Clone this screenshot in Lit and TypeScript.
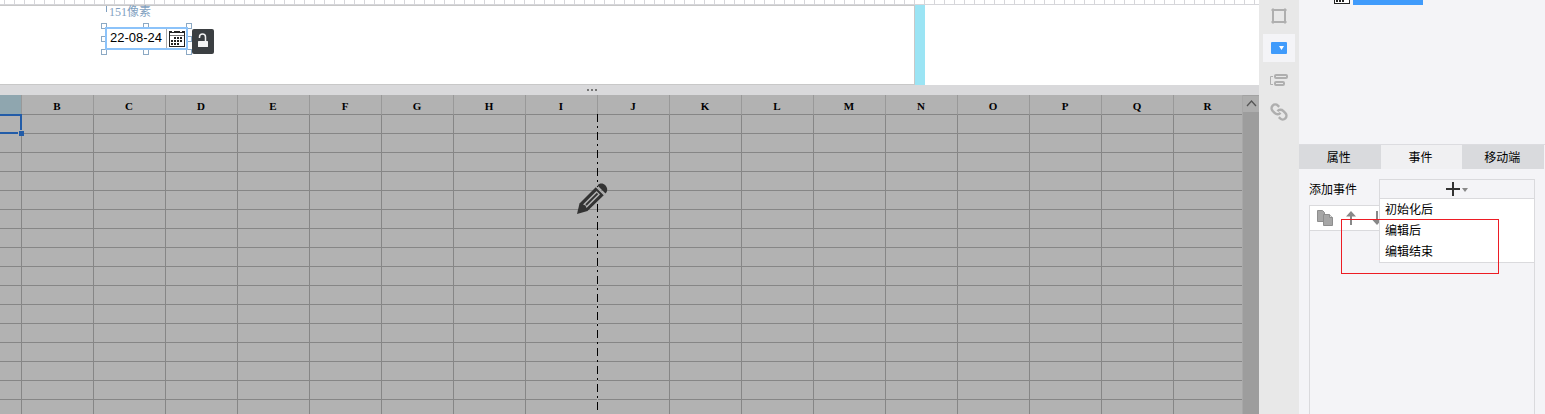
import { LitElement, html, css, svg } from "lit";
import { customElement, state } from "lit/decorators.js";

const calendarIcon = svg`
  <rect x="0.5" y="0.5" width="15" height="15" fill="#fff" stroke="#222"></rect>
  <path d="M0 0h16v2H0z" fill="#222"></path>
  <path d="M3 0h2v1H3zM11 0h2v1h-2z" fill="#fff"></path>
  <path d="M1 4.500h14" stroke="#777"></path>
  <path d="M5 6h2v2H5zM8 6h2v2H8zM11 6h2v2h-2zM2 9h2v2H2zM5 9h2v2H5zM8 9h2v2H8zM11 9h2v2h-2zM2 12h2v2H2zM5 12h2v2H5zM8 12h2v2H8z" fill="#222"></path>`;

@customElement("form-canvas")
export class FormCanvas extends LitElement {
  static styles = css`
    :host { display: block; background: #fff; }
    .ruler {
      height: 4px;
      border-bottom: 1px solid #d6d6da;
      background: repeating-linear-gradient(90deg, transparent 0 4px, #d6d6da 4px 5px, transparent 5px 10px);
    }
    .stage { display: flex; height: 80px; }
    .paper {
      position: relative;
      box-sizing: border-box;
      width: 915px;
      border: solid #c8c8c8;
      border-width: 1px 1px 1px 0;
    }
    .edge { width: 10px; background: #9be4f4; }
    .size {
      position: absolute;
      left: 106px;
      top: 0;
      padding-left: 3px;
      color: #7f9fbf;
      font: 12px/13px "Liberation Serif", "Noto Sans CJK SC", serif;
    }
    .size::before {
      content: "";
      position: absolute;
      left: 0;
      top: 0;
      height: 6px;
      border-left: 1px solid #7f9fbf;
    }
    .widget { position: absolute; left: 101px; top: 17px; width: 91px; height: 32px; }
    .handle {
      position: absolute;
      box-sizing: border-box;
      width: 6px;
      height: 6px;
      border: 1px solid #8ca9c4;
      background: #fff;
    }
    .n { top: 0; }
    .m { top: 13px; }
    .s { bottom: 0; }
    .w { left: 0; }
    .c { left: 42px; }
    .e { right: 0; }
    .field {
      position: absolute;
      left: 4px;
      top: 4px;
      box-sizing: border-box;
      width: 83px;
      height: 23px;
      display: flex;
      border: 2px solid #8cc3fa;
      background: #fff;
    }
    .date {
      flex: 1;
      min-width: 0;
      padding: 0 0 2px 3px;
      border: 0;
      outline: 0;
      background: none;
      color: #000;
      font: 13px/16px "Liberation Sans", sans-serif;
    }
    .pick {
      padding: 0 1px 0 2px;
      border: 0;
      border-left: 1px solid #aaa;
      background: #fff;
      line-height: 0;
    }
    .lock {
      position: absolute;
      left: 192px;
      top: 23px;
      width: 22px;
      height: 25px;
      padding: 0;
      border: 0;
      border-radius: 2px;
      background: #3b3f42;
      line-height: 0;
    }
  `;
  render() {
    const handles = ["n w", "n c", "n e", "m w", "m e", "s w", "s c", "s e"];
    return html`
      <div class="ruler"></div>
      <div class="stage">
        <div class="paper">
          <span class="size">151像素</span>
          <div class="widget">
            ${handles.map((h) => html`<i class="handle ${h}"></i>`)}
            <div class="field">
              <input class="date" type="text" aria-label="日期" value="22-08-24" />
              <button class="pick" aria-label="选择日期">
                <svg width="16" height="16" viewBox="0 0 16 16">${calendarIcon}</svg>
              </button>
            </div>
          </div>
          <button class="lock" aria-label="锁定">
            <svg width="22" height="25" viewBox="0 0 22 25">
              <path d="M7.500 9V8a3 3 0 0 1 6 0V12" fill="none" stroke="#f4f4f4" stroke-width="1.500"></path>
              <rect x="6" y="12" width="10" height="6" rx="0.500" fill="#f4f4f4"></rect>
            </svg>
          </button>
        </div>
        <div class="edge"></div>
      </div>
    `;
  }
}

@customElement("sheet-grid")
export class SheetGrid extends LitElement {
  static styles = css`
    :host { display: flex; position: relative; min-height: 0; overflow: hidden; background: #b2b2b2; }
    .grid { flex: 1; min-width: 0; overflow: hidden; }
    .table { width: 100%; table-layout: fixed; border-collapse: separate; border-spacing: 0; }
    .first { width: 22px; }
    .col { width: 72px; }
    .head, .cell { box-sizing: border-box; padding: 0; border: solid #868686; border-width: 0 1px 1px 0; }
    .head {
      height: 20px;
      padding: 3px 1px 0 0;
      border-right-color: #999;
      color: #000;
      font: bold 11px/16px "Liberation Serif", serif;
    }
    .head:last-child, .cell:last-child { border-right: 0; }
    .cell { height: 19px; }
    .head.on { background: #8fa6af; }
    .cursor {
      position: absolute;
      left: 0;
      top: 19px;
      width: 20px;
      height: 16px;
      border: solid #225ca8;
      border-width: 2px 2px 2px 0;
    }
    .cursor::after {
      content: "";
      position: absolute;
      right: -4px;
      bottom: -4px;
      width: 5px;
      height: 5px;
      border: solid #b2b2b2;
      border-width: 1px 0 0 1px;
      background: #225ca8;
    }
    .break {
      position: absolute;
      left: 597px;
      top: 19px;
      bottom: 0;
      width: 1px;
      background: repeating-linear-gradient(#000 0 8px, #b2b2b2 8px 12px, #000 12px 14px, #b2b2b2 14px 18px);
    }
    .edit {
      position: absolute;
      left: 47%;
      top: 88px;
      margin-left: -15px;
      padding: 0;
      border: 0;
      background: none;
      line-height: 0;
    }
    .bar { width: 15px; padding-right: 1px; border-left: 1px solid #a8a8a8; background: #9d9d9d; }
    .up {
      display: block;
      width: 16px;
      height: 17px;
      padding: 0;
      border: 0;
      border-top: 1px solid #a2a2a2;
      background: #aeaeae;
      line-height: 0;
    }
  `;
  render() {
    const cols = "BCDEFGHIJKLMNOPQR".split("");
    return html`
      <div class="grid">
        <table class="table">
          <colgroup>
            <col class="first" />
            ${cols.slice(0, -1).map(() => html`<col class="col" />`)}
            <col />
          </colgroup>
          <thead>
            <tr>
              <th class="head on"></th>
              ${cols.map((c) => html`<th class="head">${c}</th>`)}
            </tr>
          </thead>
          <tbody>
            ${Array.from({ length: 60 }, () => html`
              <tr><td class="cell"></td>${cols.map(() => html`<td class="cell"></td>`)}</tr>`)}
          </tbody>
        </table>
      </div>
      <div class="cursor"></div>
      <div class="break"></div>
      <button class="edit" aria-label="编辑">
        <svg width="31" height="31" viewBox="0 0 31 31">
          <path d="M0 31L2.500 20.500 19.500 3.500l8 8L10.500 28z" fill="#333"></path>
          <path d="M6 21.500L19.500 8l3.500 3.500L9.500 25l-1-2.500z" fill="#b2b2b2"></path>
          <path d="M9 22L20.500 10.500" stroke="#333" stroke-width="1.800"></path>
          <path d="M20.500 2.500C22.500 0 26 0 28.300 2.300S31 8 28.500 10.500z" fill="#333"></path>
          <path d="M19 3.500l8.500 8.500" stroke="#b2b2b2" stroke-width="1.500"></path>
        </svg>
      </button>
      <div class="bar">
        <button class="up" aria-label="向上滚动">
          <svg width="15" height="16" viewBox="0 0 15 16">
            <path d="M3 10l4.500-5 4.500 5" fill="none" stroke="#555" stroke-width="1.300"></path>
          </svg>
        </button>
      </div>
    `;
  }
}

@customElement("tool-strip")
export class ToolStrip extends LitElement {
  static styles = css`
    :host { display: flex; flex-direction: column; align-items: center; gap: 4px; padding-top: 2px; background: #e8e8e8; }
    .tool { width: 32px; height: 28px; padding: 0; border: 0; background: none; line-height: 0; }
    .on { background: #f4f4f7; }
    .icon { fill: none; stroke: #afafaf; }
  `;
  render() {
    return html`
      <button class="tool" aria-label="组件设置">
        <svg class="icon" width="16" height="16" viewBox="0 0 16 16">
          <rect x="2" y="2" width="12" height="12" stroke-width="2"></rect>
          <path d="M0.500 2h3M2 0.500v3M12.500 2h3M14 0.500v3M0.500 14h3M2 12.500v3M12.500 14h3M14 12.500v3" stroke-width="2"></path>
        </svg>
      </button>
      <button class="tool on" aria-label="控件设置">
        <svg width="16" height="12" viewBox="0 0 16 12">
          <rect width="16" height="12" rx="1" fill="#409bfb"></rect>
          <path d="M8 4h5l-2.500 4z" fill="#fff"></path>
        </svg>
      </button>
      <button class="tool" aria-label="条件属性">
        <svg class="icon" width="18" height="14" viewBox="0 0 18 14">
          <path d="M3 3.500H.5v8H3" stroke-width="1"></path>
          <rect x="5" y="2" width="12" height="3" rx="1" stroke-width="2"></rect>
          <rect x="5" y="9" width="9" height="3" rx="1" stroke-width="2"></rect>
        </svg>
      </button>
      <button class="tool" aria-label="超级链接">
        <svg class="icon" width="18" height="18" viewBox="0 0 24 24">
          <g transform="translate(24 0) scale(-1 1)" stroke-width="3.200">
            <path d="M10 13a5 5 0 0 0 7.540.540l3-3a5 5 0 0 0-7.070-7.070l-1.720 1.710"></path>
            <path d="M14 11a5 5 0 0 0-7.540-.540l-3 3a5 5 0 0 0 7.070 7.070l1.710-1.710"></path>
          </g>
        </svg>
      </button>
    `;
  }
}

@customElement("event-panel")
export class EventPanel extends LitElement {
  static styles = css`
    :host {
      display: flex;
      flex-direction: column;
      background: #f4f4f7;
      color: #000;
      font: 12px/18px "Noto Sans CJK SC", sans-serif;
    }
    .tree { display: flex; gap: 3px; height: 144px; padding-left: 35px; }
    .node { align-self: flex-start; width: 70px; height: 5px; background: #409bfb; }
    .thumb { margin-top: -12px; }
    .tabs { display: flex; padding-right: 1px; border-top: 1px solid #dcdce0; }
    .tab {
      flex: 1;
      height: 24px;
      padding: 0 2px 0 0;
      border: 0;
      background: #d9dadd;
      color: inherit;
      font: inherit;
    }
    .tab.on { background: #f0f0f2; }
    .body { position: relative; display: flex; flex-direction: column; flex: 1; padding: 10px 10px 0; }
    .row { display: flex; height: 26px; align-items: flex-start; }
    .label { width: 70px; line-height: 20px; }
    .add { position: relative; z-index: 1; flex: 1; }
    .plus {
      display: block;
      box-sizing: border-box;
      width: 100%;
      height: 20px;
      padding: 0;
      border: 1px solid #dadadd;
      background: #f4f4f7;
      line-height: 0;
    }
    .menu {
      position: absolute;
      top: 20px;
      left: 0;
      right: 0;
      margin: 0;
      padding: 0;
      border: solid #dadadd;
      border-width: 0 1px 1px;
      background: #fff;
      list-style: none;
    }
    .item {
      display: block;
      width: 100%;
      height: 21px;
      padding: 0 5px 2px;
      border: 0;
      background: none;
      color: inherit;
      font: inherit;
      text-align: left;
    }
    .list { flex: 1; border: 1px solid #dadadd; border-bottom: 0; }
    .tools { display: flex; gap: 8px; height: 24px; padding-left: 6px; align-items: center; border-bottom: 1px solid #dadadd; background: #fff; }
    .tool { padding: 0; border: 0; background: none; line-height: 0; }
    .mark {
      position: absolute;
      z-index: 2;
      left: 42px;
      right: 46px;
      top: 50px;
      height: 53px;
      border: 1px solid #ed1c24;
      pointer-events: none;
    }
  `;

  @state() private tab = 1;

  render() {
    return html`
      <div class="tree">
        <svg class="thumb" width="16" height="16" viewBox="0 0 16 16">${calendarIcon}</svg>
        <div class="node"></div>
      </div>
      <div class="tabs" role="tablist">
        ${["属性", "事件", "移动端"].map((t, i) => html`
          <button class="tab ${i === this.tab ? "on" : ""}" role="tab" aria-selected=${i === this.tab}
            @click=${() => { this.tab = i; }}>${t}</button>`)}
      </div>
      <div class="body">
        <div class="row">
          <label class="label" for="add">添加事件</label>
          <div class="add">
            <button class="plus" id="add">
              <svg width="24" height="16" viewBox="0 0 24 16">
                <path d="M1 8h14M8 1v14" stroke="#333" stroke-width="2"></path>
                <path d="M17 7h6l-3 4z" fill="#888"></path>
              </svg>
            </button>
            <ul class="menu">
              ${["初始化后", "编辑后", "编辑结束"].map((t) => html`<li><button class="item">${t}</button></li>`)}
            </ul>
          </div>
        </div>
        <div class="list">
          <div class="tools">
            <button class="tool" aria-label="复制">
              <svg width="18" height="18" viewBox="0 0 18 18">
                <path d="M1.500 1.500h5l2 2v9h-7z" fill="#a6a6a6" stroke="#8e8e8e"></path>
                <path d="M7.500 5.500h6l3 3v8h-9z" fill="#a6a6a6" stroke="#8e8e8e"></path>
                <path d="M13.500 5.500v3h3" fill="#ddd" stroke="#8e8e8e"></path>
              </svg>
            </button>
            <button class="tool" aria-label="上移">
              <svg width="18" height="18" viewBox="0 0 18 18">
                <path d="M9 2l5 5.500h-4V16H8V7.500H4z" fill="#888"></path>
              </svg>
            </button>
            <button class="tool" aria-label="下移">
              <svg width="18" height="18" viewBox="0 0 18 18">
                <path d="M9 16l5-5.500h-4V2H8v8.500H4z" fill="#888"></path>
              </svg>
            </button>
          </div>
        </div>
        <div class="mark"></div>
      </div>
    `;
  }
}

@customElement("app-root")
export class AppRoot extends LitElement {
  static styles = css`
    :host { display: grid; grid-template-columns: minmax(0, 1fr) 40px 246px; height: 100vh; overflow: hidden; }
    .main { display: flex; flex-direction: column; min-height: 0; min-width: 0; overflow: hidden; }
    .splitter { position: relative; flex: none; height: 10px; background: #d9d9db; }
    .dots { position: absolute; left: 47%; top: 4px; margin-left: -5px; }
    .sheet { flex: 1; }
  `;
  render() {
    return html`
      <div class="main">
        <form-canvas></form-canvas>
        <div class="splitter" role="separator">
          <svg class="dots" width="10" height="2" viewBox="0 0 10 2">
            <path d="M0 0h2v2H0zM4 0h2v2H4zM8 0h2v2H8z" fill="#777"></path>
          </svg>
        </div>
        <sheet-grid class="sheet"></sheet-grid>
      </div>
      <tool-strip></tool-strip>
      <event-panel></event-panel>
    `;
  }
}
